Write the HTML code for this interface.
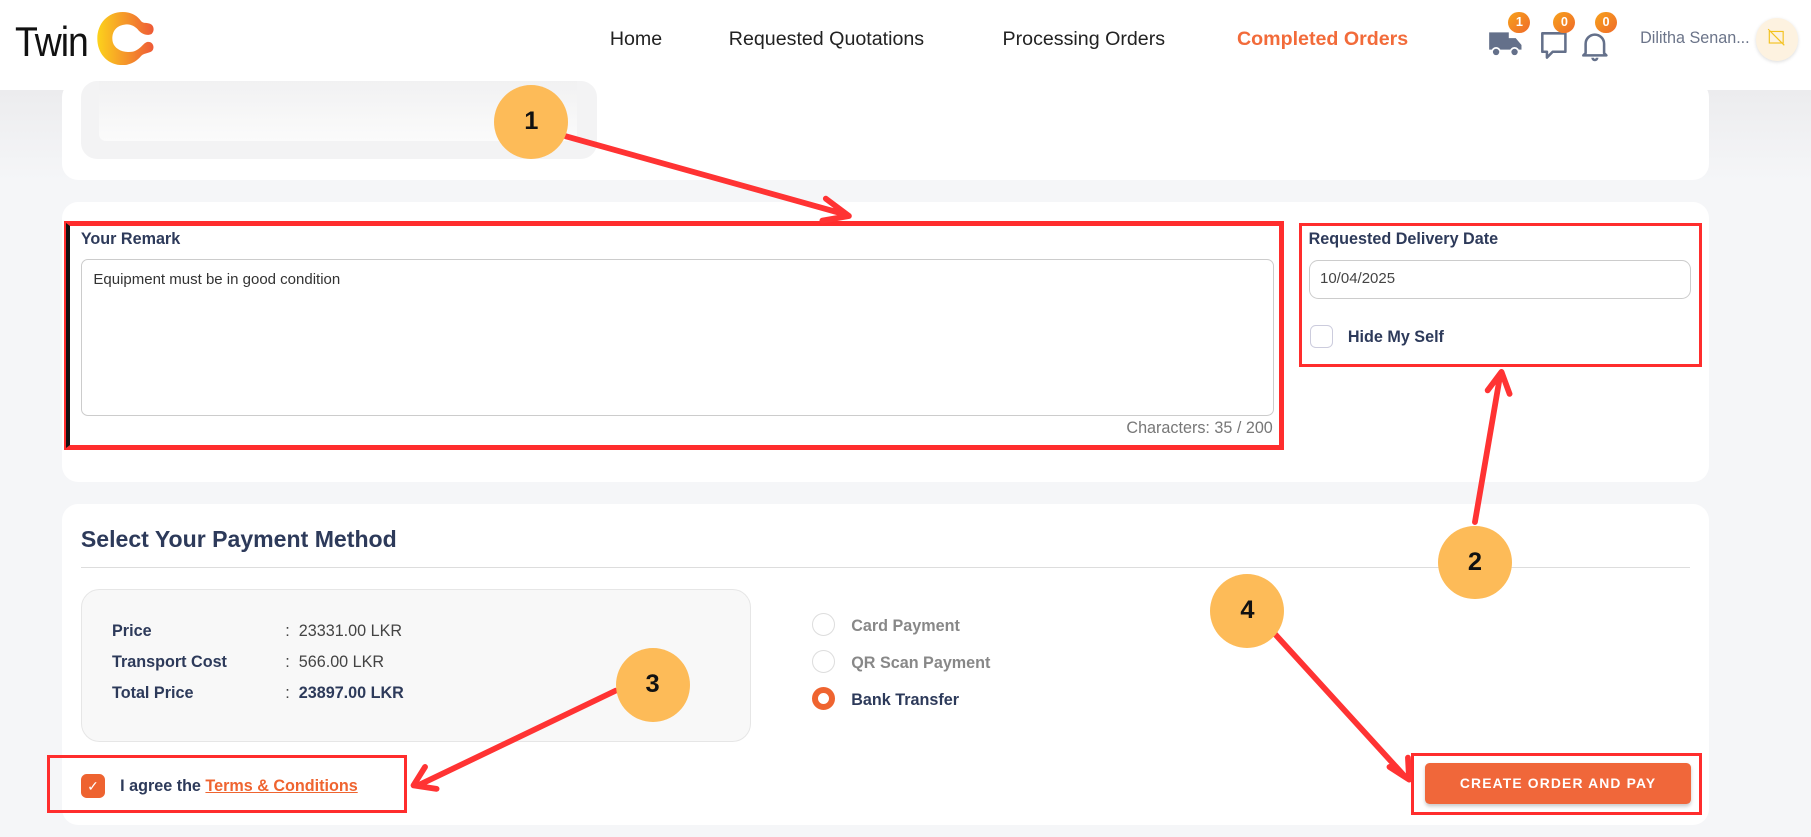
<!DOCTYPE html>
<html><head><meta charset="utf-8"><style>
*{box-sizing:border-box;margin:0;padding:0}
html,body{width:1811px;height:837px;overflow:hidden;background:#f5f6f8}
#w{zoom:1.155;width:1568px;height:725px;position:relative;font-family:"Liberation Sans",sans-serif;color:#2d3a5a}
.a{position:absolute}
.hdr{left:0;top:0;width:1568px;height:78px;background:#fff}
.nav{top:24px;font-size:17px;color:#222}
.card{background:#fff;border-radius:14px}
.rb{border:3px solid #ff2d2d}
.lbl{font-size:14px;font-weight:bold}
.badge{width:19px;height:19px;border-radius:50%;background:linear-gradient(135deg,#f7a21b,#ef6a2a);color:#fff;font-size:11px;font-weight:bold;text-align:center;line-height:19px}
.circ{width:64px;height:64px;border-radius:50%;background:#fdbb58;color:#111;font-size:22px;font-weight:bold;text-align:center;line-height:64px}
.radio{width:20px;height:20px;border-radius:50%;border:1px solid #ddd;background:#fff}
.rl{font-size:14px;font-weight:bold}
</style></head><body><div id="w">
<div class="a" style="left:0;top:78px;width:1568px;height:80px;background:linear-gradient(#ececee,#f5f6f8)"></div>
<div class="a hdr"></div>
<div class="a" style="left:13px;top:16px;font-size:36px;color:#111;letter-spacing:-1px;transform:scaleX(0.9);transform-origin:left">Twin</div>
<svg class="a" style="left:82px;top:10px" width="60" height="46" viewBox="0 0 60 46"><defs><linearGradient id="g" x1="0" x2="1"><stop offset="0" stop-color="#fcd21c"/><stop offset="1" stop-color="#ee5a37"/></linearGradient></defs><path d="M40 8C36 2 30 0 24 0 11 0 2 10 2 23 2 36 11 46 24 46 30 46 36 43 40 38 43 35 48 36 50 33 52 29 49 25 45 26 42 27 40 31 36 33 33 35 28 35 24 34 18 32 15 28 15 23 15 16 19 12 25 11 30 10 34 12 37 15 40 19 45 21 49 19 52 16 51 11 47 10 44 9 42 10 40 8Z" fill="url(#g)"/></svg>
<div class="a nav" style="left:528px">Home</div>
<div class="a nav" style="left:631px">Requested Quotations</div>
<div class="a nav" style="left:868px">Processing Orders</div>
<div class="a nav" style="left:1071px;color:#f26b3a;font-weight:bold">Completed Orders</div>
<svg class="a" style="left:1288px;top:26px" width="30" height="24" viewBox="0 0 30 24"><path d="M1 2h17v15H1z M18 7h6l5 6v4H18z" fill="#64708a"/><circle cx="7" cy="19" r="3.5" fill="#64708a" stroke="#fff" stroke-width="1.5"/><circle cx="23" cy="19" r="3.5" fill="#64708a" stroke="#fff" stroke-width="1.5"/></svg>
<div class="a badge" style="left:1306px;top:10px">1</div>
<svg class="a" style="left:1333px;top:27px" width="24" height="26" viewBox="0 0 24 26"><path d="M2 2h20v16H11l-5 5v-5H2z" fill="none" stroke="#64708a" stroke-width="2.2" stroke-linejoin="round"/></svg>
<div class="a badge" style="left:1345px;top:10px">0</div>
<svg class="a" style="left:1369px;top:26px" width="24" height="28" viewBox="0 0 24 28"><path d="M4 20V12a8 8 0 0 1 16 0v8l2 2H2z M10 24a2 2 0 0 0 4 0" fill="none" stroke="#64708a" stroke-width="2.2" stroke-linejoin="round"/></svg>
<div class="a badge" style="left:1381px;top:10px">0</div>
<div class="a" style="left:1420px;top:25px;font-size:14px;color:#6b7489">Dilitha Senan...</div>
<div class="a" style="left:1520px;top:16px;width:37px;height:37px;border-radius:50%;background:#fdf2e0;box-shadow:0 1px 3px #ddd"></div>
<svg class="a" style="left:1530px;top:24px" width="16" height="16" viewBox="0 0 16 16"><rect x="2" y="3" width="12" height="10" fill="none" stroke="#f3c220" stroke-width="1"/><path d="M1 1L15 15" stroke="#f3c220"/></svg>

<div class="a card" style="left:54px;top:70px;width:1426px;height:86px"></div>
<div class="a" style="left:70px;top:70px;width:447px;height:68px;border-radius:14px;background:#f3f3f4"></div>
<div class="a" style="left:86px;top:70px;width:414px;height:52px;border-radius:0 0 6px 6px;background:linear-gradient(#f1f1f2,#fbfbfb)"></div>

<div class="a card" style="left:54px;top:175px;width:1426px;height:242px"></div>
<div class="a rb" style="left:57px;top:193px;width:1053px;height:195px;border-left:4px solid #111;outline:2px solid #ff2d2d"></div>
<div class="a lbl" style="left:70px;top:199px">Your Remark</div>
<div class="a" style="left:70px;top:224px;width:1033px;height:136px;border:1px solid #ccc;border-radius:6px;padding:10px;font-size:13px;color:#333">Equipment must be in good condition</div>
<div class="a" style="left:900px;top:363px;width:202px;text-align:right;font-size:14px;color:#777">Characters: 35 / 200</div>
<div class="a rb" style="left:1125px;top:193px;width:349px;height:125px"></div>
<div class="a lbl" style="left:1133px;top:199px">Requested Delivery Date</div>
<div class="a" style="left:1133px;top:225px;width:331px;height:34px;border:1px solid #ccc;border-radius:8px;padding:8px 9px;font-size:13px;color:#444">10/04/2025</div>
<div class="a" style="left:1134px;top:281px;width:20px;height:20px;border:1px solid #ccd;border-radius:5px"></div>
<div class="a lbl" style="left:1167px;top:284px">Hide My Self</div>

<div class="a card" style="left:54px;top:436px;width:1426px;height:278px"></div>
<div class="a" style="left:70px;top:455px;font-size:20px;font-weight:bold">Select Your Payment Method</div>
<div class="a" style="left:70px;top:491px;width:1393px;height:1px;background:#ddd"></div>
<div class="a" style="left:70px;top:510px;width:580px;height:132px;background:#f8f8f8;border:1px solid #e6e6e6;border-radius:16px"></div>
<div class="a" style="left:97px;top:533px;font-size:14px;line-height:27px;font-weight:bold">Price<br>Transport Cost<br>Total Price</div>
<div class="a" style="left:247px;top:533px;font-size:14px;line-height:27px;color:#444">: &nbsp;23331.00 LKR<br>: &nbsp;566.00 LKR<br>: &nbsp;<b style="color:#2d3a5a">23897.00 LKR</b></div>
<div class="a radio" style="left:703px;top:531px"></div>
<div class="a radio" style="left:703px;top:563px"></div>
<div class="a radio" style="left:703px;top:595px;border:6px solid #ef6430"></div>
<div class="a rl" style="left:737px;top:534px;color:#888">Card Payment</div>
<div class="a rl" style="left:737px;top:566px;color:#888">QR Scan Payment</div>
<div class="a rl" style="left:737px;top:598px">Bank Transfer</div>
<div class="a rb" style="left:41px;top:654px;width:311px;height:50px"></div>
<div class="a" style="left:70px;top:670px;width:21px;height:21px;border-radius:5px;background:#ee6330;color:#fff;font-size:12px;text-align:center;line-height:21px">✓</div>
<div class="a lbl" style="left:104px;top:673px">I agree the <span style="color:#ef6430;text-decoration:underline">Terms &amp; Conditions</span></div>
<div class="a rb" style="left:1222px;top:652px;width:252px;height:54px"></div>
<div class="a" style="left:1234px;top:661px;width:230px;height:35px;background:#f0673a;border-radius:4px;color:#fff;font-size:12px;font-weight:bold;letter-spacing:1px;text-align:center;line-height:35px;box-shadow:0 2px 3px #ccc">CREATE ORDER AND PAY</div>

<svg class="a" style="left:0;top:0" width="1568" height="725">
<g stroke="#ff3333" stroke-width="5" fill="none" stroke-linecap="round" stroke-linejoin="round">
<path d="M490 118L733 186M715 172L735 187L712 191"/>
<path d="M1277 452L1299 324M1288 338L1300 322L1307 341"/>
<path d="M533 598L362 680M368 664L358 680L378 683"/>
<path d="M1103 548L1217 673M1203 664L1220 675L1219 656"/>
</g></svg>
<div class="a circ" style="left:428px;top:74px">1</div>
<div class="a circ" style="left:1245px;top:455px">2</div>
<div class="a circ" style="left:533px;top:561px">3</div>
<div class="a circ" style="left:1048px;top:497px">4</div>
</div></body></html>
